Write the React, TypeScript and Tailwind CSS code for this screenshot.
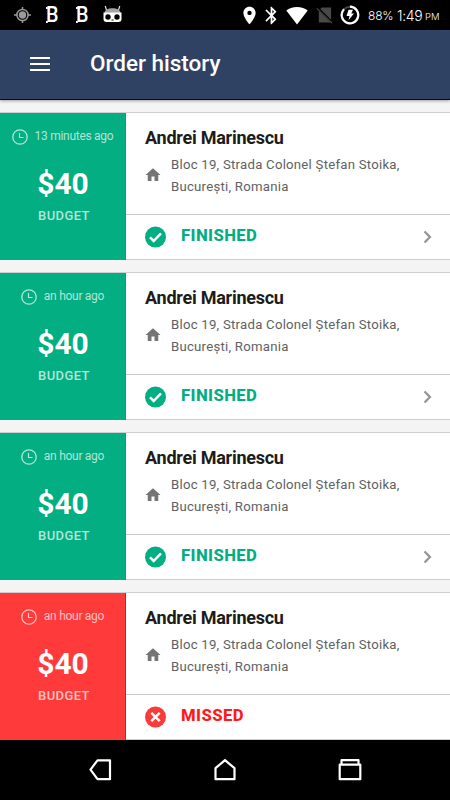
import React from "react";
import { MdBluetooth, MdHome, MdLocationOn } from "react-icons/md";

interface Order {
  id: number;
  time: string;
  budget: string;
  name: string;
  address: string[];
  status: "finished" | "missed";
}

const ADDRESS = ["Bloc 19, Strada Colonel Ștefan Stoika,", "București, Romania"];

const ORDERS: Order[] = [
  { id: 1, time: "13 minutes ago", budget: "$40", name: "Andrei Marinescu", address: ADDRESS, status: "finished" },
  { id: 2, time: "an hour ago", budget: "$40", name: "Andrei Marinescu", address: ADDRESS, status: "finished" },
  { id: 3, time: "an hour ago", budget: "$40", name: "Andrei Marinescu", address: ADDRESS, status: "finished" },
  { id: 4, time: "an hour ago", budget: "$40", name: "Andrei Marinescu", address: ADDRESS, status: "missed" },
];

const LetterBadge: React.FC = () => (
  <span className="relative block w-[14px] h-5 text-[22px] leading-[20px] font-medium text-white origin-left scale-x-90">
    B
    <span className="absolute left-0 top-[2px] w-[2px] h-[2px] bg-white" />
    <span className="absolute left-0 top-[16px] w-[2px] h-[2px] bg-white" />
  </span>
);

const StatusBar: React.FC = () => (
  <div className="flex items-center h-[30px] bg-black text-white">
    <svg className="ml-[14px]" width="17" height="18" viewBox="0 0 17 18" fill="none" stroke="#9a9a9a" aria-hidden>
      <circle cx="8.5" cy="9" r="5.6" strokeWidth="1.5" />
      <circle cx="8.5" cy="9" r="3.7" fill="#9a9a9a" stroke="none" />
      <path d="M8.5 1v3M8.5 14v3M0 9h3.500M13.500 9H17" strokeWidth="1.5" />
    </svg>
    <div className="ml-[15px]">
      <LetterBadge />
    </div>
    <div className="ml-[16px]">
      <LetterBadge />
    </div>
    <svg className="ml-[13px] mt-[-3px]" width="19" height="18" viewBox="0 0 19 18" aria-hidden>
      <path d="M2.200 1l1.300 4M16.800 1l-1.300 4" stroke="#ddd" strokeWidth="1.200" />
      <path d="M1.500 8C1.500 5 5 3.200 9.500 3.200S17.500 5 17.500 8z" fill="#a5a5a5" />
      <path d="M.5 7.500h18V14q0 3-3 3h-12q-3 0-3-3z" fill="#fff" />
      <circle cx="5" cy="12" r="2.700" fill="#000" />
      <circle cx="14" cy="12" r="2.700" fill="#000" />
      <path d="M8.500 15h2" stroke="#000" />
    </svg>
    <MdLocationOn className="ml-[117px]" size={21} />
    <MdBluetooth className="ml-[1px]" size={21} />
    <svg className="ml-[4px]" width="22" height="19" viewBox="0 0 22 19" aria-hidden>
      <path d="M.3 4.500Q4.500 1 11 1t10.700 3.500L11 18.500z" fill="#fff" />
    </svg>
    <svg className="ml-[8px]" width="17" height="18" viewBox="0 0 18 18" aria-hidden>
      <path d="M6 1h10v16H3V4z" fill="#484848" />
      <path d="M1.500 1.500l16 16" stroke="#000" strokeWidth="2.500" />
      <path d="M.8 2l16 15.500" stroke="#484848" strokeWidth="1.200" />
    </svg>
    <svg className="ml-[7px]" width="20" height="20" viewBox="0 0 20 20" fill="none" aria-hidden>
      <circle cx="10" cy="10" r="8.300" stroke="#444" strokeWidth="2" />
      <path d="M10 1.700A8.300 8.300 0 1 1 4 4.200" stroke="#fff" strokeWidth="2.200" />
      <path d="M8.500 4.800h4.500L11.300 8.500H14L8.500 15.300l1-4.300H6.500z" fill="#fff" />
    </svg>
    <span className="ml-[8px] mt-px w-[26px] text-[12px] leading-none tracking-[-0.200px] font-light whitespace-nowrap font-['Inter',sans-serif]">88%</span>
    <span className="ml-[3px] mt-px w-[26px] text-[14px] leading-none tracking-[-0.300px] font-light whitespace-nowrap font-['Inter',sans-serif]">1:49</span>
    <span className="ml-[2px] mt-[4px] text-[9.500px] leading-none font-light font-['Inter',sans-serif]">PM</span>
  </div>
);

const Header: React.FC = () => (
  <header className="relative z-10 flex items-center h-[70px] bg-[#2f4264] border-b border-[#080838] shadow-[0_1px_3px_rgba(0,0,0,0.35)]">
    <div className="ml-[30px] mt-[-2px] flex flex-col gap-[4px]">
      <span className="w-[20px] h-[2px] bg-white" />
      <span className="w-[20px] h-[2px] bg-white" />
      <span className="w-[20px] h-[2px] bg-white" />
    </div>
    <h1 className="ml-[40px] mt-[-4px] text-[22.500px] leading-[30px] font-medium text-white">Order history</h1>
  </header>
);

const ClockIcon: React.FC = () => (
  <svg width="16" height="16" viewBox="0 0 16 16" fill="none" stroke="currentColor" aria-hidden>
    <circle cx="8" cy="8" r="7.200" strokeWidth="1.300" />
    <path d="M7.500 4v4.500h4" strokeWidth="1.200" />
  </svg>
);

const StatusIcon: React.FC<{ missed: boolean }> = ({ missed }) => (
  <svg width="22" height="22" viewBox="0 0 22 22" fill="none" stroke="#fff" aria-hidden>
    <circle cx="11.500" cy="11" r="10.500" fill={missed ? "#fb3a3a" : "#02ae82"} stroke="none" />
    {missed ? (
      <path d="M7.300 6.800l8.400 8.400M15.700 6.800l-8.400 8.400" strokeWidth="2.500" />
    ) : (
      <path d="M6 11.300l3.700 3.700 7.300-7.700" strokeWidth="2.500" />
    )}
  </svg>
);

const OrderCard: React.FC<{ order: Order }> = ({ order }) => {
  const missed = order.status === "missed";
  return (
    <div className="flex h-[148px] border-t border-[#cfcfcf] bg-white">
      <div
        className={`flex flex-col items-center w-[126px] shrink-0 text-white ${missed ? "bg-[#ff3a3a] border-r border-[#f31212]" : "bg-[#02ae82] border-r border-[#02a579]"}`}
      >
        <div className="flex items-center h-[16px] mt-[16px] text-white/70">
          <ClockIcon />
          <span className="ml-[7px] mt-[-2px] text-[12px] leading-[16px] tracking-[-0.280px] whitespace-nowrap">{order.time}</span>
        </div>
        <span className="mt-[19px] ml-[1px] text-[30px] leading-[40px] font-bold">{order.budget}</span>
        <span className="mt-[4px] ml-[3px] text-[13px] leading-[16px] tracking-[0.400px] font-medium text-white/70">BUDGET</span>
      </div>
      <div className="flex flex-col flex-1 border-b border-[#cfcfcf]">
        <div className="h-[102px] pl-[19px] pt-[14px] border-b border-[#c8c8c8]">
          <h2 className="text-[18px] leading-[22px] tracking-[-0.250px] font-bold text-[#1c1c1c]">{order.name}</h2>
          <div className="flex items-center mt-[5px]">
            <MdHome className="ml-[-1px] mt-[-2px] text-[#757575]" size={18} />
            <p className="ml-[9px] text-[13.200px] leading-[22px] tracking-[0.240px] text-[#616161]">
              {order.address.map((line) => (
                <span key={line} className="block whitespace-nowrap">
                  {line}
                </span>
              ))}
            </p>
          </div>
        </div>
        <div className="flex items-center flex-1 pl-[18px] pr-[18px]">
          <StatusIcon missed={missed} />
          <span
            className={`ml-[15px] mt-[-2px] text-[16.700px] leading-[20px] tracking-[0.400px] font-extrabold ${missed ? "text-[#ff1a1a]" : "text-[#02ae82]"}`}
          >
            {missed ? "MISSED" : "FINISHED"}
          </span>
          {!missed && (
            <svg className="ml-auto" width="9" height="14" viewBox="0 0 9 14" fill="none" stroke="#949494" strokeWidth="2.200" aria-hidden>
              <path d="M1.500 1.500L7 7l-5.500 5.500" />
            </svg>
          )}
        </div>
      </div>
    </div>
  );
};

const NavBar: React.FC = () => (
  <nav className="flex items-center justify-between h-[60px] pl-[88px] pr-[88px] bg-black">
    <svg width="24" height="24" viewBox="0 0 24 24" fill="none" stroke="#fff" strokeWidth="2.200" strokeLinejoin="round" aria-hidden>
      <path d="M9.500 2.300H22v18.900H9.500L2.500 11.700z" />
    </svg>
    <svg width="24" height="24" viewBox="0 0 24 24" fill="none" stroke="#fff" strokeWidth="2.200" strokeLinejoin="round" aria-hidden>
      <path d="M12 2.200l9.500 8v11h-19v-11z" />
    </svg>
    <svg width="24" height="24" viewBox="0 0 24 24" fill="none" stroke="#fff" strokeWidth="2.200" strokeLinejoin="round" aria-hidden>
      <path d="M1.700 6.700h20.600v14.500H1.700zM3.500 6.500V2.200h17v4.300" />
    </svg>
  </nav>
);

const App: React.FC = () => {
  return (
    <div className="flex flex-col w-[450px] h-[800px] overflow-hidden bg-[#f4f4f4] font-['Roboto',sans-serif]">
      <StatusBar />
      <Header />
      <main className="flex flex-col gap-3 h-[640px] pt-3 overflow-hidden">
        {ORDERS.map((order) => (
          <OrderCard key={order.id} order={order} />
        ))}
      </main>
      <NavBar />
    </div>
  );
};

export default App;
